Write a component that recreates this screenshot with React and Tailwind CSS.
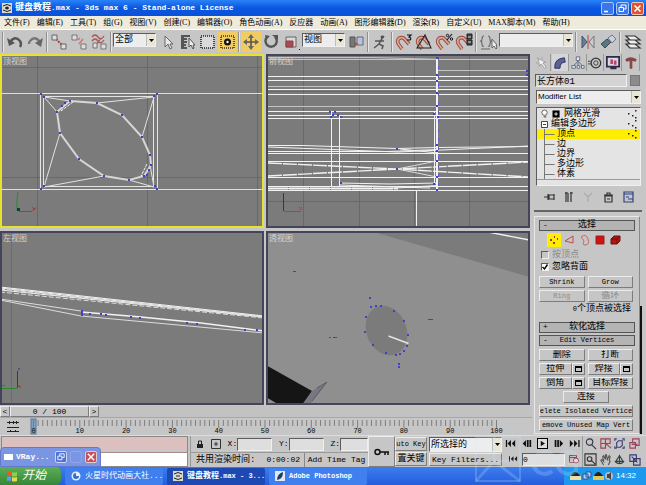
import clsx from 'clsx';

const MENUS = ['文件(F)', '编辑(E)', '工具(T)', '组(G)', '视图(V)', '创建(C)', '编辑器(O)', '角色动画(A)', '反应器', '动画(A)', '图形编辑器(D)', '渲染(R)', '自定义(U)', 'MAX脚本(M)', '帮助(H)'];
const TICKS = Array.from({ length: 101 }, (_, i) => i);
const RAISED = 'border border-t-[#ececec] border-l-[#ececec] border-b-[#7c7c7c] border-r-[#7c7c7c] bg-[#c6c6c6]';
const SUNKEN = 'border border-t-[#5c5c5c] border-l-[#5c5c5c] border-b-[#f0f0f0] border-r-[#f0f0f0]';

/* ---------- small controls ---------- */

function Sep() {
  return <span className="w-1 h-5 shrink-0 flex justify-center"><span className="w-[2px] h-full border-l border-[#8f8f8f] border-r border-r-[#e6e6e6]" /></span>;
}

function Tool({ label, active, children }) {
  return (
    <button aria-label={label} className={clsx('w-5 h-5 shrink-0 flex items-center justify-center', active && 'bg-[#f0cc62]')}>
      <svg viewBox="0 0 20 20" className="w-5 h-5" fill="none" stroke="#333" strokeWidth="1.3">{children}</svg>
    </button>
  );
}

function Combo({ label, value, className, textClass = 'text-[9px]' }) {
  return (
    <div className={clsx('relative shrink-0 flex items-center bg-[#ededed]', SUNKEN, className)}>
      <select aria-label={label} className={clsx('block appearance-none w-full pl-px pr-2 bg-transparent text-black leading-[14px]', textClass)}>
        <option>{value}</option>
      </select>
      <span className="absolute right-0 top-0 bottom-0 w-[9px] bg-[#e9e6d4] border-l border-[#bbb] flex items-center justify-center pointer-events-none">
        <svg viewBox="0 0 5 3" className="w-[5px] h-[3px]"><path d="M0 0h5L2.5 3z" fill="#000" /></svg>
      </span>
    </div>
  );
}

function PushButton({ children, disabled, className }) {
  return (
    <button disabled={disabled} className={clsx('h-[12px] flex items-center justify-center whitespace-nowrap overflow-hidden', RAISED, disabled && 'text-[#8b8b8b]', className)}>
      {children}
    </button>
  );
}

function Latin({ children }) {
  return <span className="text-[7px]">{children}</span>;
}

function Magnet({ children }) {
  return (
    <>
      <path d="M8 17L4.500 12a3.600 3.600 0 0 1 6-5L15 12" stroke="#94483c" strokeWidth="3.600" />
      <path d="M8 17L4.500 12a3.600 3.600 0 0 1 6-5L15 12" stroke="#e0a596" strokeWidth="1.800" />
      {children}
    </>
  );
}

/* ---------- title, menu, toolbar ---------- */

function TitleBar() {
  return (
    <header className="h-4 flex items-center gap-[3px] px-[2px] bg-gradient-to-b from-[#2a82f6] via-[#0a57e2] to-[#0a50d8] text-white">
      <svg viewBox="0 0 10 10" className="w-[10px] h-[10px]"><rect width="10" height="10" fill="#d9d9d0" /><path d="M1 3q4-3 8 0M1 7q4 3 8 0M3 5h4" stroke="#222" fill="none" /><circle cx="5" cy="5" r="1.5" fill="#222" /></svg>
      <h1 className="flex-1 text-[9px] leading-4 font-bold whitespace-pre">键盘教程<span className="text-[8px]">.max - 3ds max 6 - Stand-alone License</span></h1>
      <div className="flex gap-[2px]">
        <button aria-label="最小化" className="w-[13px] h-[13px] rounded-[2px] border border-[#a9c6f8] bg-[#3a76ea]"><svg viewBox="0 0 11 11"><path d="M2 8.500h4" stroke="#fff" strokeWidth="1.6" /></svg></button>
        <button aria-label="还原" className="w-[13px] h-[13px] rounded-[2px] border border-[#a9c6f8] bg-[#3a76ea]"><svg viewBox="0 0 11 11" fill="none" stroke="#fff"><path d="M4 4V2h5v4H7M2 4.500h4.500v4H2z" /></svg></button>
        <button aria-label="关闭" className="w-[13px] h-[13px] rounded-[2px] border border-[#f3c5b5] bg-[#e0532c]"><svg viewBox="0 0 11 11"><path d="M2.500 2.500l6 6m0-6l-6 6" stroke="#fff" strokeWidth="1.600" /></svg></button>
      </div>
    </header>
  );
}

function MenuBar() {
  return (
    <nav className="h-[13px] flex items-center gap-[7px] pl-1 bg-[#eeebdc] font-['Liberation_Serif','Noto_Sans_CJK_SC',serif] text-[8px] leading-none">
      {MENUS.map((m) => <button key={m} className="whitespace-nowrap">{m}</button>)}
    </nav>
  );
}

function Toolbar() {
  return (
    <div className="h-[25px] flex items-center pl-px border-t border-white bg-[#c6c6c6] overflow-hidden">
      <Sep />
      <Tool label="撤销"><path d="M5 10q5-7 10-1q2 3 0 6" stroke="#555" strokeWidth="2.400" /><path d="M2 6l2 8 6-3z" fill="#555" stroke="none" /></Tool>
      <Tool label="重做"><path d="M15 10q-5-7-10-1q-1 1-1 3" stroke="#777" strokeWidth="2.400" /><path d="M18 6l-2 9-6-4z" fill="#666" stroke="none" /></Tool>
      <Sep />
      <Tool label="链接"><path d="M7 7l7 7" stroke="#b33" strokeWidth="2" strokeDasharray="2 1" /><path d="M3 3h5v5H3zM12 12h5v5h-5z" fill="#ddd" stroke="#666" strokeWidth="1" /></Tool>
      <Tool label="断开链接"><path d="M9 8l2-2m-1 6l4-5" stroke="#c77" strokeWidth="1.500" /><path d="M3 3h5v5H3zM12 12h5v5h-5z" fill="#ddd" stroke="#777" strokeWidth="1" /></Tool>
      <Tool label="绑定"><path d="M3 5q3-4 6 0t6-1M3 9q3-4 6 0t6-1M5 16l7-10" stroke="#a55" /><path d="M4 11h4v5H4zM12 12h5v5h-5z" fill="#ddd" stroke="#777" strokeWidth="1" /></Tool>
      <Sep />
      <Combo label="选择过滤器" value="全部" className="w-[43px] h-[14px] mb-1 mr-px" />
      <Tool label="选择"><path d="M8 4v11l3-3 2 5 2-1-2-4h3z" fill="#e8e8e8" stroke="#666" strokeWidth="1" /></Tool>
      <Tool label="按名称选择"><path d="M4 4h9M4 7h6M4 10h6M4 13h5M4 16h6" stroke="#555" strokeWidth="1.800" /><path d="M4 4h3v13H4z" fill="#555" stroke="none" /><path d="M12 6v9l2-2 2 4 1-1-1-3h2z" fill="#eee" stroke="#555" strokeWidth="1" /></Tool>
      <Tool label="矩形区域"><rect x="4" y="4" width="13" height="12" fill="#dadada" stroke="#222" strokeWidth="1.600" strokeDasharray="1 1" /></Tool>
      <Tool label="窗口/交叉" active><rect x="4" y="4" width="13" height="12" stroke="#333" strokeDasharray="1 1" strokeWidth="1.600" /><circle cx="10.500" cy="10" r="3.500" fill="#111" stroke="none" /><circle cx="10.500" cy="10" r="1.200" fill="#fff" stroke="none" /></Tool>
      <Sep />
      <Tool label="移动" active><path d="M10 3v14M3 10h14" stroke="#555" strokeWidth="1.600" /><path d="M10 2l3 4H7zM10 18l3-4H7zM2 10l4-3v6zM18 10l-4-3v6z" fill="#666" stroke="none" /></Tool>
      <Tool label="旋转"><path d="M6 5q-3 4 0 8 5 4 9-1 2-4-1-7" stroke="#555" strokeWidth="2.400" /><path d="M11 3h6v5zM4 3l5 1-4 4z" fill="#555" stroke="none" /></Tool>
      <Tool label="缩放"><path d="M5 5h10v10H5z" fill="#d9d9d9" stroke="#666" strokeWidth="1" /><path d="M5 9h7v6H5z" fill="#a84a58" stroke="#844" strokeWidth="1" /><path d="M18 17h1v1h-1z" fill="#222" stroke="none" /></Tool>
      <Combo label="参考坐标系" value="视图" className="w-[43px] h-[14px] mb-1 mx-px" />
      <Tool label="轴点中心"><path d="M4 5h5v10H4z" fill="#777" stroke="#555" strokeWidth="1" /><path d="M11 5h6v8h-6z" fill="#b9c3dc" stroke="#667" strokeWidth="1" /><circle cx="10" cy="12" r="1.500" fill="#b44" stroke="none" /></Tool>
      <Sep />
      <Tool label="操纵"><path d="M5 9h9M11 8l-2 4 4 2-1 3M9 12l-5 4M14 4l-3 4" stroke="#555" strokeWidth="1.500" /><circle cx="12" cy="5" r="1.400" fill="#555" stroke="none" /></Tool>
      <Sep />
      <Tool label="三维捕捉"><Magnet><path d="M13 3h4l-2 2q3 1 1 3h-3" stroke="#111" strokeWidth="1.200" /></Magnet></Tool>
      <Tool label="角度捕捉"><Magnet><path d="M3 16L11 3l6 13z" stroke="#222" strokeWidth="1.100" /></Magnet></Tool>
      <Tool label="百分比捕捉"><Magnet><path d="M13 8l5-6" stroke="#111" strokeWidth="1.100" /><circle cx="13.500" cy="3.500" r="1.200" stroke="#111" strokeWidth="1" /><circle cx="17.500" cy="7" r="1.200" stroke="#111" strokeWidth="1" /></Magnet></Tool>
      <Tool label="微调器捕捉"><Magnet><path d="M13 2h5v5h-5zM13 8h5v5h-5z" fill="#444" stroke="#222" strokeWidth="1" /><path d="M14 5h3M14 10h3" stroke="#ddd" strokeWidth="1" /></Magnet></Tool>
      <Sep />
      <Tool label="命名选择集"><path d="M6 4Q4 4 4 7t-2 2q2 0 2 3t2 2M10 4q2 0 2 3t2 2q-2 0-2 3t-2 2M3 17h9" stroke="#666" strokeWidth="1.100" /><path d="M14 7v9l2-2 2 3 1-1-1-3h1z" fill="#eee" stroke="#666" strokeWidth="1" /></Tool>
      <Combo label="命名选择" value="" className="w-[74px] h-[14px] mb-1 mx-px" />
      <Sep />
      <Tool label="镜像"><path d="M4 4v12l5-6z" fill="#67809a" stroke="#456" strokeWidth="1" /><path d="M16 4v12l-5-6z" fill="#ccc" stroke="#777" strokeWidth="1" /><path d="M10 3v14" stroke="#b44" strokeWidth="1" /></Tool>
      <Tool label="对齐"><path d="M3 12l6-5 4 3-6 6z" fill="#557b82" stroke="#445" strokeWidth="1" /><path d="M10 6l4-3 4 4-4 4z" fill="#c9d4d8" stroke="#778" strokeWidth="1" /></Tool>
      <Sep />
      <Tool label="图层管理器"><path d="M8 16L4 12h9l5 4zM8 12L4 8h9l5 4zM8 8L4 4h9l5 4z" fill="#eee" stroke="#333" strokeWidth="1.200" /></Tool>
    </div>
  );
}

/* ---------- viewports ---------- */

function Dots({ points, size = 2 }) {
  return points.map(([x, y]) => <rect key={`${x}-${y}`} x={x - size / 2} y={y - size / 2} width={size} height={size} fill="#4340c8" stroke="none" />);
}

function Viewport({ label, viewBox, active, children }) {
  return (
    <section className={clsx('relative h-[174px] min-w-0 border-2 bg-[#7b7b7b]', active ? 'border-[#e8e22e]' : 'border-[#45455a]')}>
      <svg viewBox={viewBox} preserveAspectRatio="none" className="block w-full h-full" fill="none" stroke="#f2f2f2">{children}</svg>
      <h2 className="absolute left-px top-px text-[8px] leading-[10px] text-[#d2d2d2]">{label}</h2>
    </section>
  );
}

const RING = [[70, 101], [97, 103], [122, 115], [142, 137], [150, 155], [151, 165], [144, 176], [129, 180], [104, 176], [79, 159], [60, 133], [57, 112]];

function TopView() {
  return (
    <Viewport label="顶视图" viewBox="2 56 260 170" active>
      <path d="M37.500 54v174M147.500 54v174M257.500 54v174M0 67.500h264M0 177.500h264" stroke="#686868" />
      <path d="M0 93.500h264M0 189.500h264" stroke="#ddd" />
      <path d="M40.500 93.500h117v96h-117zM43.500 96.500h110v90h-110z" stroke="#e4e4e4" />
      <path d="M44 97l26 4M44 97l13 15M154 97l-57 6M154 97l-12 40M44 187l16-54M44 187l60-11M154 187l-25-7M154 187l-4-22" stroke="#e2e2e2" />
      <polygon points={RING.map((p) => p.join()).join(' ')} stroke="#d6d6d6" strokeWidth="2" />
      <path d="M73 102L61 111M147 164l-6 12" strokeDasharray="3 1" />
      <Dots points={[...RING, [41, 94], [44, 97], [154, 96], [157, 94], [41, 189], [44, 186], [155, 186], [157, 189], [62, 106], [65, 103], [149, 170], [147, 175]]} />
      <path d="M18 192l-1 7v12" stroke="#258a30" />
      <path d="M19 211.500h12l5-4M32 207l3 3" stroke="#b3323c" />
      <path d="M17 208h3v3h-3z" fill="#234" stroke="none" />
    </Viewport>
  );
}

function FrontView() {
  return (
    <Viewport label="前视图" viewBox="268 56 260 170">
      <path d="M303.500 54v174M359.500 54v174M414.500 54v174M469.500 54v174M266 91.500h264M266 201.500h264" stroke="#686868" />
      <path d="M268 57.500h105l70 2h86M268 59.500h170M438 70.500h91M268 86.500h261M268 106.500h261" stroke="#c4c4c4" />
      <path d="M268 76.500h261M268 80.500h261M268 89.500h261M268 94.500h261M268 111.500h261M268 115.500h261M268 118.500h261M268 161.500h261M268 177.500h261" />
      <path d="M268 145.500h34l95 3 40-1 92-1M268 147l130 5 131-6M268 151.500h120l50-2M268 153.500h261M400 149l38 4" />
      <path d="M268 163l129 6 132 8M268 176l129-7 132-7" strokeWidth="1.400" strokeDasharray="14 1" />
      <path d="M397 169l40-8M397 169l40 8" stroke="#ddd" />
      <path d="M268 186.500h261M268 188.500h120l50-3M268 190.500h261M340 183l50 1 47-1M340 185l90 3" />
      <path d="M268 188.500h130" strokeWidth="2" strokeDasharray="20 1" />
      <path d="M331.500 112v74M339.500 116v70M434.500 112v72M416.500 190v38" />
      <path d="M437 57v133" strokeWidth="2" />
      <path d="M438.500 57v133" stroke="#5a58cb" strokeDasharray="3 6" />
      <Dots points={[[330, 112], [333, 115], [335, 112], [338, 115], [341, 117], [331, 117], [437, 58], [437, 75], [437, 81], [437, 93], [437, 106], [434, 114], [438, 117], [437, 145], [437, 151], [437, 161], [437, 177], [434, 184], [437, 190], [341, 183], [397, 149], [397, 169], [527, 71], [527, 75]]} />
      <path d="M283.500 193v18" stroke="#303080" /><path d="M284 211.500h17M299 207l3 3m0-3l-3 3" stroke="#a8424a" />
    </Viewport>
  );
}

function LeftView() {
  return (
    <Viewport label="左视图" viewBox="2 233 260 170">
      <path d="M11.500 231v174" stroke="#66706e" />
      <path d="M0 287l264 29M0 288l264 29M0 290l264 27" />
      <path d="M0 289l264 28M0 292l264 26" stroke="#ddd" strokeDasharray="5 2" />
      <path d="M0 299l81 12M0 300l81 16 183 17" stroke="#dcdcdc" />
      <path d="M81 312l60 5 60 6 63 8" strokeWidth="1.600" />
      <Dots points={[[82, 311], [82, 313], [82, 315], [90, 314], [101, 314], [106, 315], [131, 317], [140, 318], [187, 323], [197, 324], [245, 330], [257, 330]]} />
      <path d="M17.500 371v17M18 369h2" stroke="#30309a" /><path d="M2 388.500h15M2 386l3-1" stroke="#2b862f" /><path d="M18 386h2v2" stroke="#a33" />
    </Viewport>
  );
}

function PerspectiveView() {
  return (
    <Viewport label="透视图" viewBox="268 233 260 170">
      <path d="M266 231h264v175H266z" fill="#8f8f8f" stroke="none" />
      <path d="M370 231l160 46v-46z" fill="#7b7b7b" stroke="none" />
      <path d="M488 232l41 8" strokeWidth="1.400" />
      <ellipse cx="386.500" cy="330.500" rx="20" ry="25.500" transform="rotate(-22 386.500 330.500)" fill="#7b7b7b" stroke="none" />
      <path d="M388.500 336l20 7.500" stroke="#e4e4e4" strokeWidth="1.400" />
      <path d="M266 365l46 26-10 15h-21l-15-9z" fill="#151515" stroke="none" />
      <path d="M312 391l15-9-18 24h-8z" fill="#77777f" stroke="none" />
      <path d="M317 388l10-6-15 19" stroke="#5d5d66" strokeWidth="1" />
      <Dots points={[[370, 298], [371, 307], [376, 306], [381, 306], [394, 311], [404, 321], [408, 335], [407, 346], [404, 351], [400, 354], [396, 355], [386, 353], [373, 345], [365, 332], [366, 317], [399, 364], [399, 367]]} />
      <path d="M293 271.500h3M329 337.500h2m2 0h4M428 319.500h5" stroke="#4340c8" strokeWidth="1" />
    </Viewport>
  );
}

function TimeSlider() {
  return (
    <div className="h-[12px] flex items-center bg-[#c2c2c2] leading-none border-b border-[#a8a8a8]">
      <button aria-label="上一帧" className={clsx('w-[10px] h-[11px] text-[8px] leading-[9px]', RAISED)}>&lt;</button>
      <button className={clsx('w-[79px] h-[11px] text-[8px] leading-[9px]', RAISED)}>0 / 100</button>
      <button aria-label="下一帧" className={clsx('w-[10px] h-[11px] text-[8px] leading-[9px]', RAISED)}>&gt;</button>
    </div>
  );
}

function TrackBar() {
  return (
    <div className="h-[17px] flex bg-[#c6c6c6]">
      <button aria-label="打开迷你曲线编辑器" className="w-[26px] flex items-center justify-center">
        <svg viewBox="0 0 12 12" className="w-3 h-3" fill="none" stroke="#222"><path d="M0 1.500h12M0 6.500h12M0 10.500h12M2.500 0v3M6.500 0v3M9.500 0v3M4 9l-2 2M8 9l2 2" /></svg>
      </button>
      <div className="relative flex-1 mr-7">
        <svg viewBox="0 0 478 17" preserveAspectRatio="none" className="w-full h-full">
          <rect x="5" y="1" width="5" height="15" fill="#7ba0c0" stroke="#56799a" />
          {TICKS.map((t) => <path key={t} d={`M${7.500 + t * 4.630} 2v${t % 10 === 0 ? 8 : 6}`} stroke="#7d7d7d" />)}
        </svg>
        <div className="absolute inset-x-0 bottom-0 flex justify-between text-[7px] leading-[8px]">
          {TICKS.filter((t) => t % 10 === 0).map((t) => <span key={t} className="w-[15px] text-center">{t}</span>)}
        </div>
      </div>
    </div>
  );
}

/* ---------- command panel ---------- */

function Rollout({ sign, title }) {
  return (
    <button className="h-[11px] w-full relative flex items-center justify-center border border-[#555] bg-[#b4b4b4] leading-none">
      <span className="absolute left-[3px] top-0 text-[8px]">{sign}</span>{title}
    </button>
  );
}

function PanelTabs() {
  return (
    <div className="h-[17px] flex justify-between items-center pr-[6px]">
      {[
        ['创建', <path key="a" d="M4 3l8 4-3 1 4 5-2 1-4-5-2 3zM2 2l2 1M8 1v2M1 8h2" fill="#f4f4f4" stroke="#999" />],
        ['修改', <path key="a" d="M2 14Q1 3 13 2l1 5Q8 7 8 14z" fill="#5a6196" stroke="#2c3157" />],
        ['层次', <path key="a" d="M6 1h4v4H6zM1 11h4v3H1zM7 11h3v3H7zM12 11h3v3h-3zM8 5v6M8 6l-5 5M8 6l5 5" fill="#eef" stroke="#567" />],
        ['运动', <g key="a" fill="none" stroke="#333"><circle cx="9" cy="8" r="5.500" strokeWidth="1.500" /><circle cx="9" cy="8" r="2.500" /><path d="M0 6h3M0 9h3" /></g>],
        ['显示', <g key="a"><path d="M1 1h14v11H1zM5 14h7" fill="#d8d8e4" stroke="#2b2b4a" strokeWidth="2" /><path d="M5 4h3v5H5zM9 5h3v5H9z" fill="#b8446a" /></g>],
        ['工具', <path key="a" d="M2 4q5-4 12 0l-1 2-4-1v9H7V5L3 6z" fill="#9c3d3d" stroke="#744" />],
      ].map(([label, icon], i) => (
        <button key={label} aria-label={label} className={clsx('w-[17px] h-[17px] flex items-center justify-center border-r border-[#999]', i === 1 && 'bg-[#d6d6d6]')}>
          <svg viewBox="0 0 16 16" className="w-[14px] h-[14px]">{icon}</svg>
        </button>
      ))}
    </div>
  );
}

function StackRow({ children, active, sub, dots }) {
  return (
    <li className={clsx('h-[10px] flex items-center relative', active && 'bg-[#ffee00]', sub ? 'pl-[20px]' : 'pl-1')}>
      {sub && <svg viewBox="0 0 12 10" className="absolute left-[7px] top-0 w-3 h-[10px]"><path d="M.5 0v10M.5 5.500h10" stroke="#777" fill="none" /></svg>}
      {children}
      {dots && <svg viewBox="0 0 10 10" className="ml-auto mr-[3px] w-[10px] h-[10px]"><path d="M1 4h1.500v1.500H1zM5 6h1.500v1.500H5zM8 1h1.500v1.500H8zM8 8h1.500v1.500H8z" fill="#222" /></svg>}
    </li>
  );
}

function ModifierStack() {
  return (
    <ul className={clsx('h-[79px] pt-px bg-[#e4e4e4] text-[9px] leading-[10px]', SUNKEN)}>
      <StackRow dots>
        <svg viewBox="0 0 26 10" className="w-[23px] h-[10px]"><circle cx="4" cy="3.500" r="3" fill="#fff" stroke="#555" /><path d="M3 7h3v2H3z" fill="#777" /><path d="M13 1h8v8h-8z" fill="#000" /><path d="M15 5h4M17 3v4" stroke="#fff" /></svg>
        网格光滑
      </StackRow>
      <StackRow dots>
        <svg viewBox="0 0 10 10" className="w-[10px] h-[10px]"><path d="M.5 2.500h6v6h-6zM2 5.500h3" fill="#fff" stroke="#444" /></svg>编辑多边形
      </StackRow>
      <StackRow sub active dots>顶点</StackRow>
      <StackRow sub>边</StackRow>
      <StackRow sub>边界</StackRow>
      <StackRow sub>多边形</StackRow>
      <StackRow sub>体素</StackRow>
      <li className="border-t border-[#999]" />
    </ul>
  );
}

function StackTools() {
  return (
    <div className="h-[21px] flex items-center justify-between px-1">
      {[
        ['锁定堆栈', 'M0 6h4M4 3v6M5 4h5v4H5zM10 3v6'],
        ['显示最终结果', 'M3 1v10M5 2v9M8 1v10M2 2h3M7 2h3'],
        ['使唯一', 'M1 2l4 4 4-4M5 6v5'],
        ['移除修改器', 'M2 5h7v6H2zM1 4h9M4 4V2h3v2M4 8h3'],
        ['配置修改器集', 'M1 1h9v10H1zM1 3h9M3 6h3M5 8h5'],
      ].map(([label, d], i) => (
        <button key={label} aria-label={label} className="w-[18px] flex items-center justify-center">
          <svg viewBox="0 0 11 12" className="w-[11px] h-3"><path d={d} fill="none" stroke={i === 2 ? '#aaa' : i === 4 ? '#2c4282' : '#333'} strokeWidth="1.200" /></svg>
        </button>
      ))}
    </div>
  );
}

function SelectionRollout() {
  return (
    <div className="flex flex-col">
      <Rollout sign="-" title="选择" />
      <div className="h-[18px] flex items-center gap-px pl-[8px]">
        <button aria-label="顶点" className="w-[14px] h-[14px] bg-[#ffee00]"><svg viewBox="0 0 14 14"><path d="M3 6h2v2H3zM7 3h1v2H7zM10 5h1v2h-1zM6 9h2v2H6z" fill="#a33" /></svg></button>
        <button aria-label="边" className="w-[14px] h-[14px]"><svg viewBox="0 0 14 14"><path d="M3 8l8-5v7z" fill="none" stroke="#c44" /></svg></button>
        <button aria-label="边界" className="w-[14px] h-[14px]"><svg viewBox="0 0 14 14"><path d="M4 4q5-4 7 2t-3 6q-3 0-1-4-1-2-3-4z" fill="none" stroke="#c66" /></svg></button>
        <button aria-label="多边形" className="w-[14px] h-[14px]"><svg viewBox="0 0 14 14"><path d="M4 3h8v8H4z" fill="#d01212" stroke="#922" /></svg></button>
        <button aria-label="元素" className="w-[14px] h-[14px]"><svg viewBox="0 0 14 14"><path d="M4 6l3-3h6v5l-3 3H4z" fill="#b51414" stroke="#611" /><path d="M4 6h6v5M10 6l3-3" stroke="#611" fill="none" /></svg></button>
      </div>
      <label className="h-3 flex items-center gap-[3px] pl-[2px] text-[#8b8b8b]">
        <input type="checkbox" disabled className={clsx('appearance-none w-2 h-2 bg-[#c6c6c6]', SUNKEN)} />按顶点
      </label>
      <label className="h-3 flex items-center gap-[3px] pl-[2px]">
        <span className="relative w-2 h-2 flex">
          <input type="checkbox" defaultChecked className={clsx('appearance-none w-2 h-2 bg-white', SUNKEN)} />
          <svg viewBox="0 0 8 8" className="absolute inset-0 w-2 h-2 pointer-events-none"><path d="M1.500 4l2 2 3-4.500" fill="none" stroke="#000" strokeWidth="1.400" /></svg>
        </span>忽略背面
      </label>
      <div className="grid grid-cols-2 gap-x-[3px] gap-y-[2px] pr-[2px] pt-[3px]">
        <PushButton><Latin>Shrink</Latin></PushButton>
        <PushButton><Latin>Grow</Latin></PushButton>
        <PushButton disabled><Latin>Ring</Latin></PushButton>
        <PushButton disabled>循环</PushButton>
      </div>
      <p className="h-[14px] pr-1 text-right leading-[14px]"><Latin>0</Latin>个顶点被选择</p>
    </div>
  );
}

function Settings({ label }) {
  return <button aria-label={label} className={clsx('w-[13px] h-3 flex items-center justify-center shrink-0', RAISED)}><span className="w-[7px] h-[6px] border border-t-2 border-black" /></button>;
}

function VerticesRollout() {
  return (
    <>
      <div className="grid grid-cols-2 gap-x-[3px] gap-y-[2px] pr-[2px] pt-[3px]">
        <PushButton>删除</PushButton>
        <PushButton>打断</PushButton>
        <div className="flex"><PushButton className="flex-1">拉伸</PushButton><Settings label="拉伸设置" /></div>
        <div className="flex"><PushButton className="flex-1">焊接</PushButton><Settings label="焊接设置" /></div>
        <div className="flex"><PushButton className="flex-1">倒角</PushButton><Settings label="倒角设置" /></div>
        <PushButton>目标焊接</PushButton>
      </div>
      <div className="flex flex-col items-center gap-[2px] pr-[2px] pt-[2px]">
        <PushButton className="w-[46px]">连接</PushButton>
        <PushButton className="w-full"><Latin>elete Isolated Vertice</Latin></PushButton>
        <PushButton className="w-full"><Latin>emove Unused Map Vert</Latin></PushButton>
      </div>
    </>
  );
}

function CommandPanel() {
  return (
    <aside className="w-[114px] shrink-0 pl-[2px] flex flex-col bg-[#c6c6c6] text-[9px] leading-none">
      <PanelTabs />
      <div className="flex items-center gap-[3px] pt-[3px] pr-[6px] pl-px">
        <input aria-label="对象名称" defaultValue="长方体01" className={clsx('flex-1 min-w-0 h-[13px] px-px bg-[#d4d4d4] text-[9px]', SUNKEN)} />
        <span className="w-[10px] h-[11px] bg-[#8c8c8c] border border-[#777]" />
      </div>
      <Combo label="修改器列表" value="Modifier List" className="h-[14px] mt-[3px] mr-[5px] ml-[2px]" textClass="text-[8px] font-['Liberation_Sans',sans-serif]" />
      <div className="mt-[3px] mr-[5px] ml-[2px]"><ModifierStack /><StackTools /></div>
      <div className="mt-[3px] mr-1 border-t-2 border-[#666]" />
      <div className="flex mt-1 pr-[3px]">
        <div className="flex-1 min-w-0 border border-[#e8e8e8] border-r-[#888] px-1 pt-[3px] pb-[2px]">
          <SelectionRollout />
          <div className="h-[6px]" />
          <Rollout sign="+" title="软化选择" />
          <div className="h-[2px]" />
          <Rollout sign="-" title={<Latin>Edit Vertices</Latin>} />
          <VerticesRollout />
        </div>
        <div className="w-[3px] flex flex-col justify-end"><span className="h-[128px] w-[2px] bg-[#111]" /></div>
      </div>
    </aside>
  );
}

/* ---------- status bar ---------- */

function Coord({ axis, className }) {
  return (
    <label className="flex items-center text-[8px]">{axis}:
      <input className={clsx('h-[13px] bg-[#dedede]', SUNKEN, className)} />
    </label>
  );
}

const PLAYBACK = [
  ['转至开头', 'M1 2h1.500v8H1zM7 2v8L3 6zM12 2v8L8 6z'],
  ['上一帧', 'M6 2v8L2 6zM7 2h2v8H7zM10 2h2v8h-2z'],
  ['播放', 'M4 2v8l6-4z'],
  ['下一帧', 'M8 2v8l4-4zM5 2h2v8H5zM2 2h2v8H2z'],
  ['转至结尾', 'M1 2v8l4-4zM6 2v8l4-4zM11 2h1.500v8H11z'],
];

const NAV = [
  ['缩放', 'M6 2a3.500 3.500 0 100 7 3.500 3.500 0 000-7M8 8l5 5', '#334'],
  ['缩放所有视图', 'M2 2h5v5H2zM7 2h5v5H7zM2 7h5v5H2zM6 6l7 6', '#a0424f'],
  ['最大化显示', 'M2 4V2h2M10 2h2v2M12 10v2h-2M4 12H2v-2M4 6l2-2h4v5l-2 2H4z', '#3a3a76'],
  ['所有视图最大化', 'M2 6h6v6H2zM5 6V2h7v7H8M4 8h6', '#a0425f'],
  ['区域缩放', 'M1 1h12v12H1zM6 4a2.500 2.500 0 100 5 2.500 2.500 0 000-5M8 8l4 4', '#333'],
  ['平移', 'M5 13L2 8l1-1 2 2-1-5 1-1 2 4V2h1l1 5 2-4 1 1-1 4 1 1-2 4', '#555'],
  ['弧形旋转', 'M7 2v10M2 9q5 5 10 0M3 9l4-6 4 6z', '#344'],
  ['最小/最大化视口', 'M2 2h7v7H2zM6 6h7v7H6zM4 4l6 6', '#3a3a76'],
];

function StatusBar() {
  return (
    <div className="flex h-[32px] pr-1 bg-[#c6c6c6] border-t border-[#ddd] text-[9px] leading-none">
      <div className="w-[187px] shrink-0 ml-px flex flex-col gap-[2px] border border-[#8a8a8a]">
        <div className="h-[13px] bg-[#dcbfbf]" />
        <div className="flex-1 bg-white border-t border-[#a88]" />
      </div>
      <div className="w-[178px] shrink-0 ml-[2px] border-l border-[#999] flex flex-col">
        <div className="h-[16px] pl-[5px] flex items-center justify-between">
          <button aria-label="锁定选择"><svg viewBox="0 0 8 10" className="w-2 h-[10px]"><path d="M1 5h6v4H1z" fill="#222" /><path d="M2.500 5V2h3v3" fill="none" stroke="#222" /></svg></button>
          <button aria-label="绝对模式"><svg viewBox="0 0 10 10" className="w-[10px] h-[10px]"><path d="M.5.500h9v9h-9zM5 3v4M3 5h4" fill="none" stroke="#333" /></svg></button>
          <Coord axis="X" className="w-[35px]" />
          <Coord axis="Y" className="w-[35px]" />
          <Coord axis="Z" className="w-[28px]" />
        </div>
        <div className="flex-1 flex items-center border-t border-[#999] pl-[5px] whitespace-nowrap">
          <span>共用渲染时间:</span>
          <span className="ml-auto pr-1 text-[8px]">0:00:02</span>
          <button className="h-[14px] w-[64px] border-l border-[#888] text-[8px]">Add Time Tag</button>
        </div>
      </div>
      <button aria-label="设置关键点" className={clsx('w-[27px] shrink-0 flex items-center justify-center', RAISED)}>
        <svg viewBox="0 0 16 8" className="w-4 h-2" fill="none" stroke="#111" strokeWidth="1.500"><circle cx="3.500" cy="4" r="2.500" /><path d="M6 4h9M11 4v3M14 4v3" /></svg>
      </button>
      <div className="w-[32px] shrink-0 flex flex-col gap-px py-px">
        <PushButton className="flex-1"><Latin>uto Key</Latin></PushButton>
        <PushButton className="flex-1">置关键</PushButton>
      </div>
      <div className="w-[73px] shrink-0 ml-[2px] flex flex-col gap-px py-px">
        <Combo label="选择集" value="所选择的" className="h-[15px]" />
        <PushButton className="flex-1"><span className="text-[8px]">Key Filters...</span></PushButton>
      </div>
      <div className="flex-1 min-w-0 flex flex-col">
        <div className="flex-1 flex items-center justify-around">
          {PLAYBACK.map(([label, d], i) => (
            <button key={label} aria-label={label} className={clsx('flex items-center justify-center', i === 2 && 'border border-black bg-[#ddd]')}>
              <svg viewBox="0 0 13 12" className={i === 2 ? 'w-[9px] h-[9px]' : 'w-[11px] h-[11px]'}><path d={d} fill="#111" /></svg>
            </button>
          ))}
        </div>
        <div className="flex-1 flex items-center gap-1 pl-[7px]">
          <button aria-label="关键点模式"><svg viewBox="0 0 10 8" className="w-[9px] h-2"><path d="M0 1h1v6H0zM5 1v6L2 4zM9 1v6L6 4z" fill="#111" /></svg></button>
          <input aria-label="当前帧" defaultValue="0" className={clsx('w-[43px] h-[13px] bg-[#dedede] text-[8px]', SUNKEN)} />
          <button aria-label="时间配置"><svg viewBox="0 0 10 10" className="w-[10px] h-[10px]" fill="none" stroke="#9c4452"><path d="M.5 1.500h7v7h-7zM1 3.500h6" /><circle cx="7" cy="6.500" r="2.500" fill="#ddd" /></svg></button>
        </div>
      </div>
      <div className="w-[60px] shrink-0 grid grid-cols-4 place-items-center border-l border-[#999]">
        {NAV.map(([label, d, color]) => (
          <button key={label} aria-label={label}><svg viewBox="0 0 14 14" className="w-[13px] h-[13px]"><path d={d} fill="none" stroke={color} strokeWidth="1.200" /></svg></button>
        ))}
      </div>
    </div>
  );
}

function VRayWindow() {
  return (
    <div className="absolute left-0 bottom-full w-[101px] h-[20px] flex items-center gap-[3px] px-[3px] rounded-t-[4px] bg-[#7a96e2] border border-[#6678cc] text-white">
      <span className="w-[9px] h-[6px] bg-white" />
      <span className="flex-1 text-[8px] font-bold">VRay...</span>
      <button aria-label="还原 VRay" className="w-3 h-3 rounded-[2px] border border-[#cbd6f8] bg-[#4f72d8]"><svg viewBox="0 0 11 11" fill="none" stroke="#fff"><path d="M4 4V2h5v4H7M2 4.500h4.500v4H2z" /></svg></button>
      <button aria-label="最大化 VRay" disabled className="w-3 h-3 rounded-[2px] border border-[#90a5ea]" />
      <button aria-label="关闭 VRay" className="w-3 h-3 rounded-[2px] border border-[#e8c8d0] bg-[#c4505c]"><svg viewBox="0 0 11 11"><path d="M2 2l7 7m0-7l-7 7" stroke="#fff" strokeWidth="1.600" /></svg></button>
    </div>
  );
}

function Task({ children, active, icon }) {
  return (
    <button className={clsx('w-[98px] h-[17px] flex items-center gap-1 pl-[6px] rounded-[2px] whitespace-nowrap', active ? 'bg-[#1c49b4]' : 'bg-[#3f80ee]')}>
      <svg viewBox="0 0 10 10" className="w-[10px] h-[10px] shrink-0">{icon}</svg>
      <span>{children}</span>
    </button>
  );
}

/* faint emblem printed over the bottom right corner */
function Watermark() {
  return (
    <svg viewBox="0 0 110 52" className="absolute right-[66px] bottom-0 w-[110px] h-[52px] pointer-events-none" fill="none" stroke="#cfe6f8" strokeOpacity=".22">
      <path d="M6 4h44v44H6z" strokeWidth="2" />
      <path d="M24 4v24l26 20M6 48l18-20h26" strokeWidth="3" />
      <path d="M82 22a11 11 0 100 16M106 22a11 11 0 100 16v-8h-8" strokeWidth="4" />
    </svg>
  );
}

function Taskbar() {
  return (
    <footer className="relative h-[18px] flex items-center gap-1 bg-gradient-to-b from-[#3d7cf0] to-[#245edb] text-white text-[8px] leading-none">
      <VRayWindow />
      <button className="w-[61px] h-full flex items-center gap-1 pl-[6px] rounded-r-[5px] bg-gradient-to-b from-[#5cae55] to-[#36873a] text-[12px] italic">
        <svg viewBox="0 0 12 12" className="w-3 h-3"><path d="M1 2q2-1 4 0v4q-2-1-4 0z" fill="#e65a2c" /><path d="M6 2q2 1 5 0v4q-3 1-5 0z" fill="#8cd04c" /><path d="M1 7q2-1 4 0v4q-2-1-4 0z" fill="#5b9cf4" /><path d="M6 7q2 1 5 0v4q-3 1-5 0z" fill="#f6d444" /></svg>
        开始
      </button>
      <Task icon={<><circle cx="5" cy="5" r="4.500" fill="#e6effc" /><path d="M5 2a3 3 0 103 3H5z" fill="#3b6cc8" /></>}>火星时代动画大社...</Task>
      <Task active icon={<><rect width="10" height="10" fill="#d9d9d0" /><path d="M1 3q4-3 8 0M1 7q4 3 8 0M3 5h4" stroke="#222" fill="none" /></>}><b>键盘教程<Latin>.max - 3...</Latin></b></Task>
      <Task icon={<><rect width="10" height="10" fill="#dfe8f4" /><path d="M8 1Q2 3 2 9l3-1q3-2 3-7z" fill="#223c66" /></>}><b className="text-[7px]">Adobe Photoshop</b></Task>
      <div className="ml-auto w-[82px] h-full flex items-center gap-[2px] pl-[6px] bg-[#1c98ee]">
        <svg viewBox="0 0 44 12" className="w-[44px] h-3">
          <path d="M1 6q4-8 9 0z" fill="#222" /><path d="M0 6h11v4H0z" fill="#e9dfa8" />
          <path d="M13 4h5v5h-5zM16 2h5v5h-5z" fill="#a9d4f8" stroke="#26549c" />
          <path d="M24 6q4-8 9 0z" fill="#222" /><path d="M23 6h11v4H23z" fill="#e4c55c" />
          <circle cx="39" cy="6" r="4" fill="#b7bcc6" /><path d="M37 4h2l2-2v8l-2-2h-2z" fill="#444" />
        </svg>
        <time className="font-['Liberation_Sans',sans-serif] text-[8px]">14:32</time>
      </div>
      <Watermark />
    </footer>
  );
}

export default function App() {
  return (
    <div className="min-h-screen flex flex-col bg-[#c6c6c6] text-black font-['Liberation_Mono','Noto_Sans_CJK_SC',monospace]">
      <TitleBar />
      <MenuBar />
      <Toolbar />
      <main className="flex">
        <div className="flex-1 min-w-0">
          <div className="grid grid-cols-2 gap-x-[2px] gap-y-[3px] pr-[2px] pb-px">
            <TopView />
            <FrontView />
            <LeftView />
            <PerspectiveView />
          </div>
          <TimeSlider />
          <TrackBar />
        </div>
        <CommandPanel />
      </main>
      <StatusBar />
      <Taskbar />
    </div>
  );
}
